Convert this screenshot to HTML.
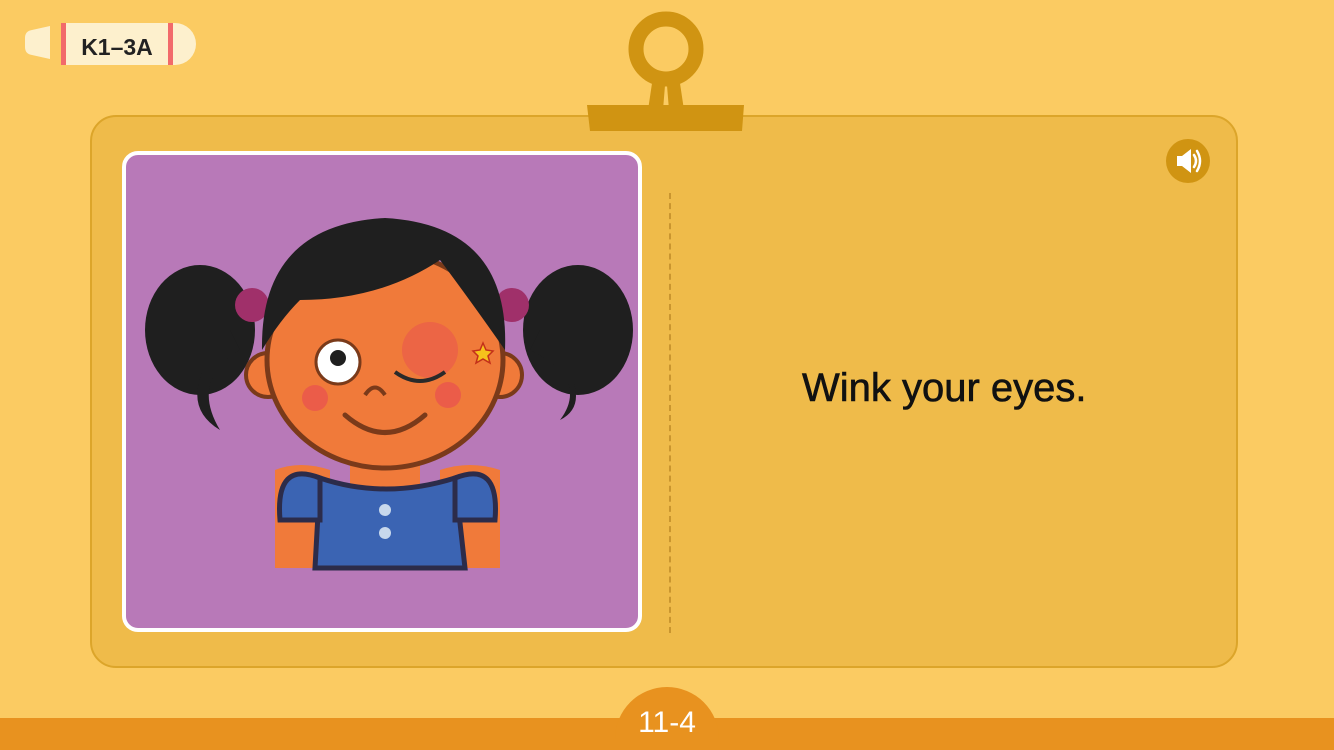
<!DOCTYPE html>
<html style="overflow:hidden;width:1334px;height:750px"><head><style>
body{margin:0;width:1334px;height:750px;background:#fbcb62;position:relative;overflow:hidden;font-family:"Liberation Sans",sans-serif}
.card{position:absolute;left:90px;top:115px;width:1148px;height:553px;background:#efbb4a;border:2px solid #dca52a;border-radius:26px;box-sizing:border-box}
.pic{position:absolute;left:122px;top:151px;width:520px;height:481px;border:4px solid #fff;border-radius:16px;box-sizing:border-box;background:#b879b8;overflow:hidden}
.dash{position:absolute;left:669px;top:193px;height:440px;border-left:2px dashed #c9952f}
.txt{position:absolute;left:802px;top:366px;font-size:40px;color:#111;-webkit-text-stroke:0.6px #111}
.bar{position:absolute;left:0;top:718px;width:1334px;height:32px;background:#e8921f}
.pg{position:absolute;left:615px;top:687px;width:104px;height:63px;border-radius:52px 52px 0 0;background:#e8921f}
.pgt{position:absolute;left:615px;top:706px;width:104px;text-align:center;color:#fff;font-size:30px}
</style></head><body>
<svg style="position:absolute;left:0;top:0" width="200" height="70">
<path d="M50 26 L32 30 Q25 31 25 38 V47 Q25 54 32 55 L50 59 Z" fill="#fdf0cd"/>
<path d="M62 23 H175 A21 21 0 0 1 175 65 H62 Z" fill="#fdf0cd"/>
<rect x="61" y="23" width="5" height="42" fill="#f26a6a"/>
<rect x="168" y="23" width="5" height="42" fill="#f26a6a"/>
<text x="117" y="55" text-anchor="middle" font-family="Liberation Sans" font-weight="bold" font-size="23" fill="#222">K1–3A</text>
</svg>
<div class="card"></div>
<svg style="position:absolute;left:586px;top:10px" width="160" height="125">
<circle cx="80" cy="39" r="30" fill="none" stroke="#d09412" stroke-width="15"/>
<path d="M68 60 L62 100 H77 L80 63 Z M92 60 L98 100 H83 L80 63 Z" fill="#d09412"/>
<path d="M1 95 H158 L156 121 H4 Z" fill="#d09412"/>
</svg>
<svg style="position:absolute;left:1165px;top:139px" width="46" height="46">
<circle cx="23" cy="22" r="22" fill="#d09412"/>
<path d="M12 17 H17 L26 10 V34 L17 27 H12 Z" fill="#fff"/>
<path d="M29 16 Q33 22 29 28 M32 12 Q38 22 32 32" fill="none" stroke="#fff" stroke-width="2.5" stroke-linecap="round"/>
</svg>
<div class="pic">
<svg width="512" height="473" viewBox="126 155 512 473" style="position:absolute;left:0;top:0">
<ellipse cx="200" cy="330" rx="55" ry="65" fill="#1f1f1f"/>
<path d="M230 330 Q170 400 220 430 Q190 380 240 350Z" fill="#1f1f1f"/>
<ellipse cx="578" cy="330" rx="55" ry="65" fill="#1f1f1f"/>
<path d="M540 330 Q600 400 560 420 Q590 380 530 350Z" fill="#1f1f1f"/>
<circle cx="252" cy="305" r="17" fill="#a0306a"/>
<circle cx="512" cy="305" r="17" fill="#a0306a"/>
<path d="M275 470 Q300 460 330 470 L330 568 H275 Z" fill="#f07a3a"/>
<path d="M440 470 Q470 460 500 470 L500 568 H440 Z" fill="#f07a3a"/>
<rect x="350" y="440" width="70" height="50" fill="#f07a3a"/>
<path d="M320 478 Q385 500 455 478 L465 568 H315 Z" fill="#3b64b3" stroke="#2c2c4a" stroke-width="5"/>
<path d="M320 478 Q275 460 280 520 L320 520 Z M455 478 Q500 460 495 520 L455 520 Z" fill="#3b64b3" stroke="#2c2c4a" stroke-width="5"/>
<circle cx="385" cy="510" r="6" fill="#c8d8ec"/><circle cx="385" cy="533" r="6" fill="#c8d8ec"/>
<circle cx="268" cy="375" r="22" fill="#f07a3a" stroke="#7a3a1a" stroke-width="4"/>
<circle cx="500" cy="375" r="22" fill="#f07a3a" stroke="#7a3a1a" stroke-width="4"/>
<ellipse cx="385" cy="360" rx="118" ry="108" fill="#f07a3a" stroke="#7a3a1a" stroke-width="5"/>
<path d="M262 350 Q260 225 385 218 Q510 225 505 350 Q470 300 440 260 Q380 300 300 300 Q280 320 262 350Z" fill="#1f1f1f"/>
<circle cx="338" cy="362" r="22" fill="#fff" stroke="#7a3a1a" stroke-width="3"/>
<circle cx="338" cy="358" r="8" fill="#1f1f1f"/>
<circle cx="430" cy="350" r="28" fill="#ec6545"/>
<path d="M395 372 Q420 390 445 372" fill="none" stroke="#2a2a2a" stroke-width="4"/>
<circle cx="315" cy="398" r="13" fill="#e85050" opacity=".7"/>
<circle cx="448" cy="395" r="13" fill="#e85050" opacity=".7"/>
<path d="M365 395 Q375 380 385 395" fill="none" stroke="#7a3a1a" stroke-width="4"/>
<path d="M345 415 Q385 450 425 415" fill="none" stroke="#7a3a1a" stroke-width="5" stroke-linecap="round"/>
<path d="M483 343 l3 7 7 1 -5 5 2 7 -7 -4 -7 4 2 -7 -5 -5 7 -1z" fill="#f6c21c" stroke="#c3301a" stroke-width="1.5"/>
</svg>
</div>
<div class="dash"></div>
<div class="txt">Wink your eyes.</div>
<div class="bar"></div>
<div class="pg"></div>
<div class="pgt">11-4</div>
</body></html>
